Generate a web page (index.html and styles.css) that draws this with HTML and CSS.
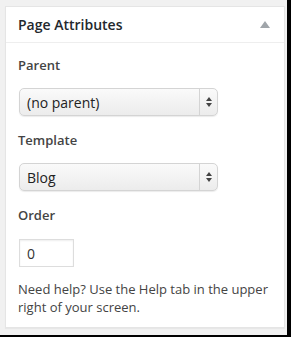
FILE: index.html
```html
<!DOCTYPE html>
<html lang="en">
<head>
    <meta charset="UTF-8">
    <title>Page Attributes</title>
    <link rel="stylesheet" href="styles.css">
</head>
<body>
    <div class="postbox">
        <div class="postbox-header">
            <h2>Page Attributes</h2>
            <span class="toggle">
                <svg width="10" height="7" viewBox="0 0 10 7"><path d="M5 0L10 7H0z" fill="#a0a5aa"/></svg>
            </span>
        </div>
        <div class="inside">
            <p class="label first">Parent</p>
            <div class="select">
                <select>
                    <option>(no parent)</option>
                </select>
                <span class="select-arrow">
                    <svg width="6" height="10" viewBox="0 0 6 10"><path d="M3 0L6 4H0zM3 10L6 6H0z" fill="#444"/></svg>
                </span>
            </div>

            <p class="label">Template</p>
            <div class="select">
                <select>
                    <option>Blog</option>
                </select>
                <span class="select-arrow">
                    <svg width="6" height="10" viewBox="0 0 6 10"><path d="M3 0L6 4H0zM3 10L6 6H0z" fill="#444"/></svg>
                </span>
            </div>

            <p class="label order-label">Order</p>
            <input class="order" type="text" value="0">

            <p class="help">Need help? Use the Help tab in the upper right of your screen.</p>
        </div>
    </div>
</body>
</html>
```

FILE: styles.css
```css
html {
    background: #000;
}

body {
    margin: 0;
    width: 287px;
    height: 335px;
    padding: 6px 0 0 5px;
    box-sizing: border-box;
    background: #f1f1f1;
    font-family: 'Open Sans', sans-serif;
    font-size: 13px;
    color: #444;
}

.postbox {
    width: 280px;
    box-sizing: border-box;
    background: #fff;
    border: 1px solid #e5e5e5;
    box-shadow: 0 1px 1px rgba(0, 0, 0, 0.04);
}

.postbox-header {
    display: flex;
    align-items: center;
    justify-content: space-between;
    height: 35px;
    padding: 0 12px;
    border-bottom: 1px solid #eee;
}

.postbox-header h2 {
    margin: 0;
    font-size: 14px;
    font-weight: 600;
    color: #23282d;
}

.toggle {
    display: flex;
    margin-right: 2px;
}

.inside {
    padding: 0 12px 11px;
}

.label {
    margin: 15px 0 14px;
    font-weight: 600;
    line-height: 18px;
}

.label.first {
    margin-top: 13px;
}

.label.order-label {
    margin-bottom: 15px;
}

.select {
    display: flex;
    width: 199px;
    height: 28px;
    margin: 1px;
    box-sizing: border-box;
    border: 1px solid #d4d4d4;
    border-radius: 5px;
    background: linear-gradient(#fafafa, #ececec);
    box-shadow: 0 1px 1px rgba(0, 0, 0, 0.08);
}

.select select {
    flex: 1;
    -webkit-appearance: none;
    appearance: none;
    border: 0;
    background: transparent;
    padding: 0 0 0 7px;
    font-family: inherit;
    font-size: 14px;
    color: #222;
    outline: none;
}

.select-arrow {
    display: flex;
    align-items: center;
    justify-content: center;
    width: 17px;
    border-left: 1px solid #d4d4d4;
}

.order {
    display: block;
    width: 55px;
    height: 28px;
    margin: 1px;
    box-sizing: border-box;
    padding: 3px 7px;
    border: 1px solid #ddd;
    box-shadow: inset 0 1px 2px rgba(0, 0, 0, 0.07);
    font-family: inherit;
    font-size: 14px;
    color: #333;
    outline: none;
}

.help {
    margin: 13px 0 0;
    line-height: 18px;
}
```
